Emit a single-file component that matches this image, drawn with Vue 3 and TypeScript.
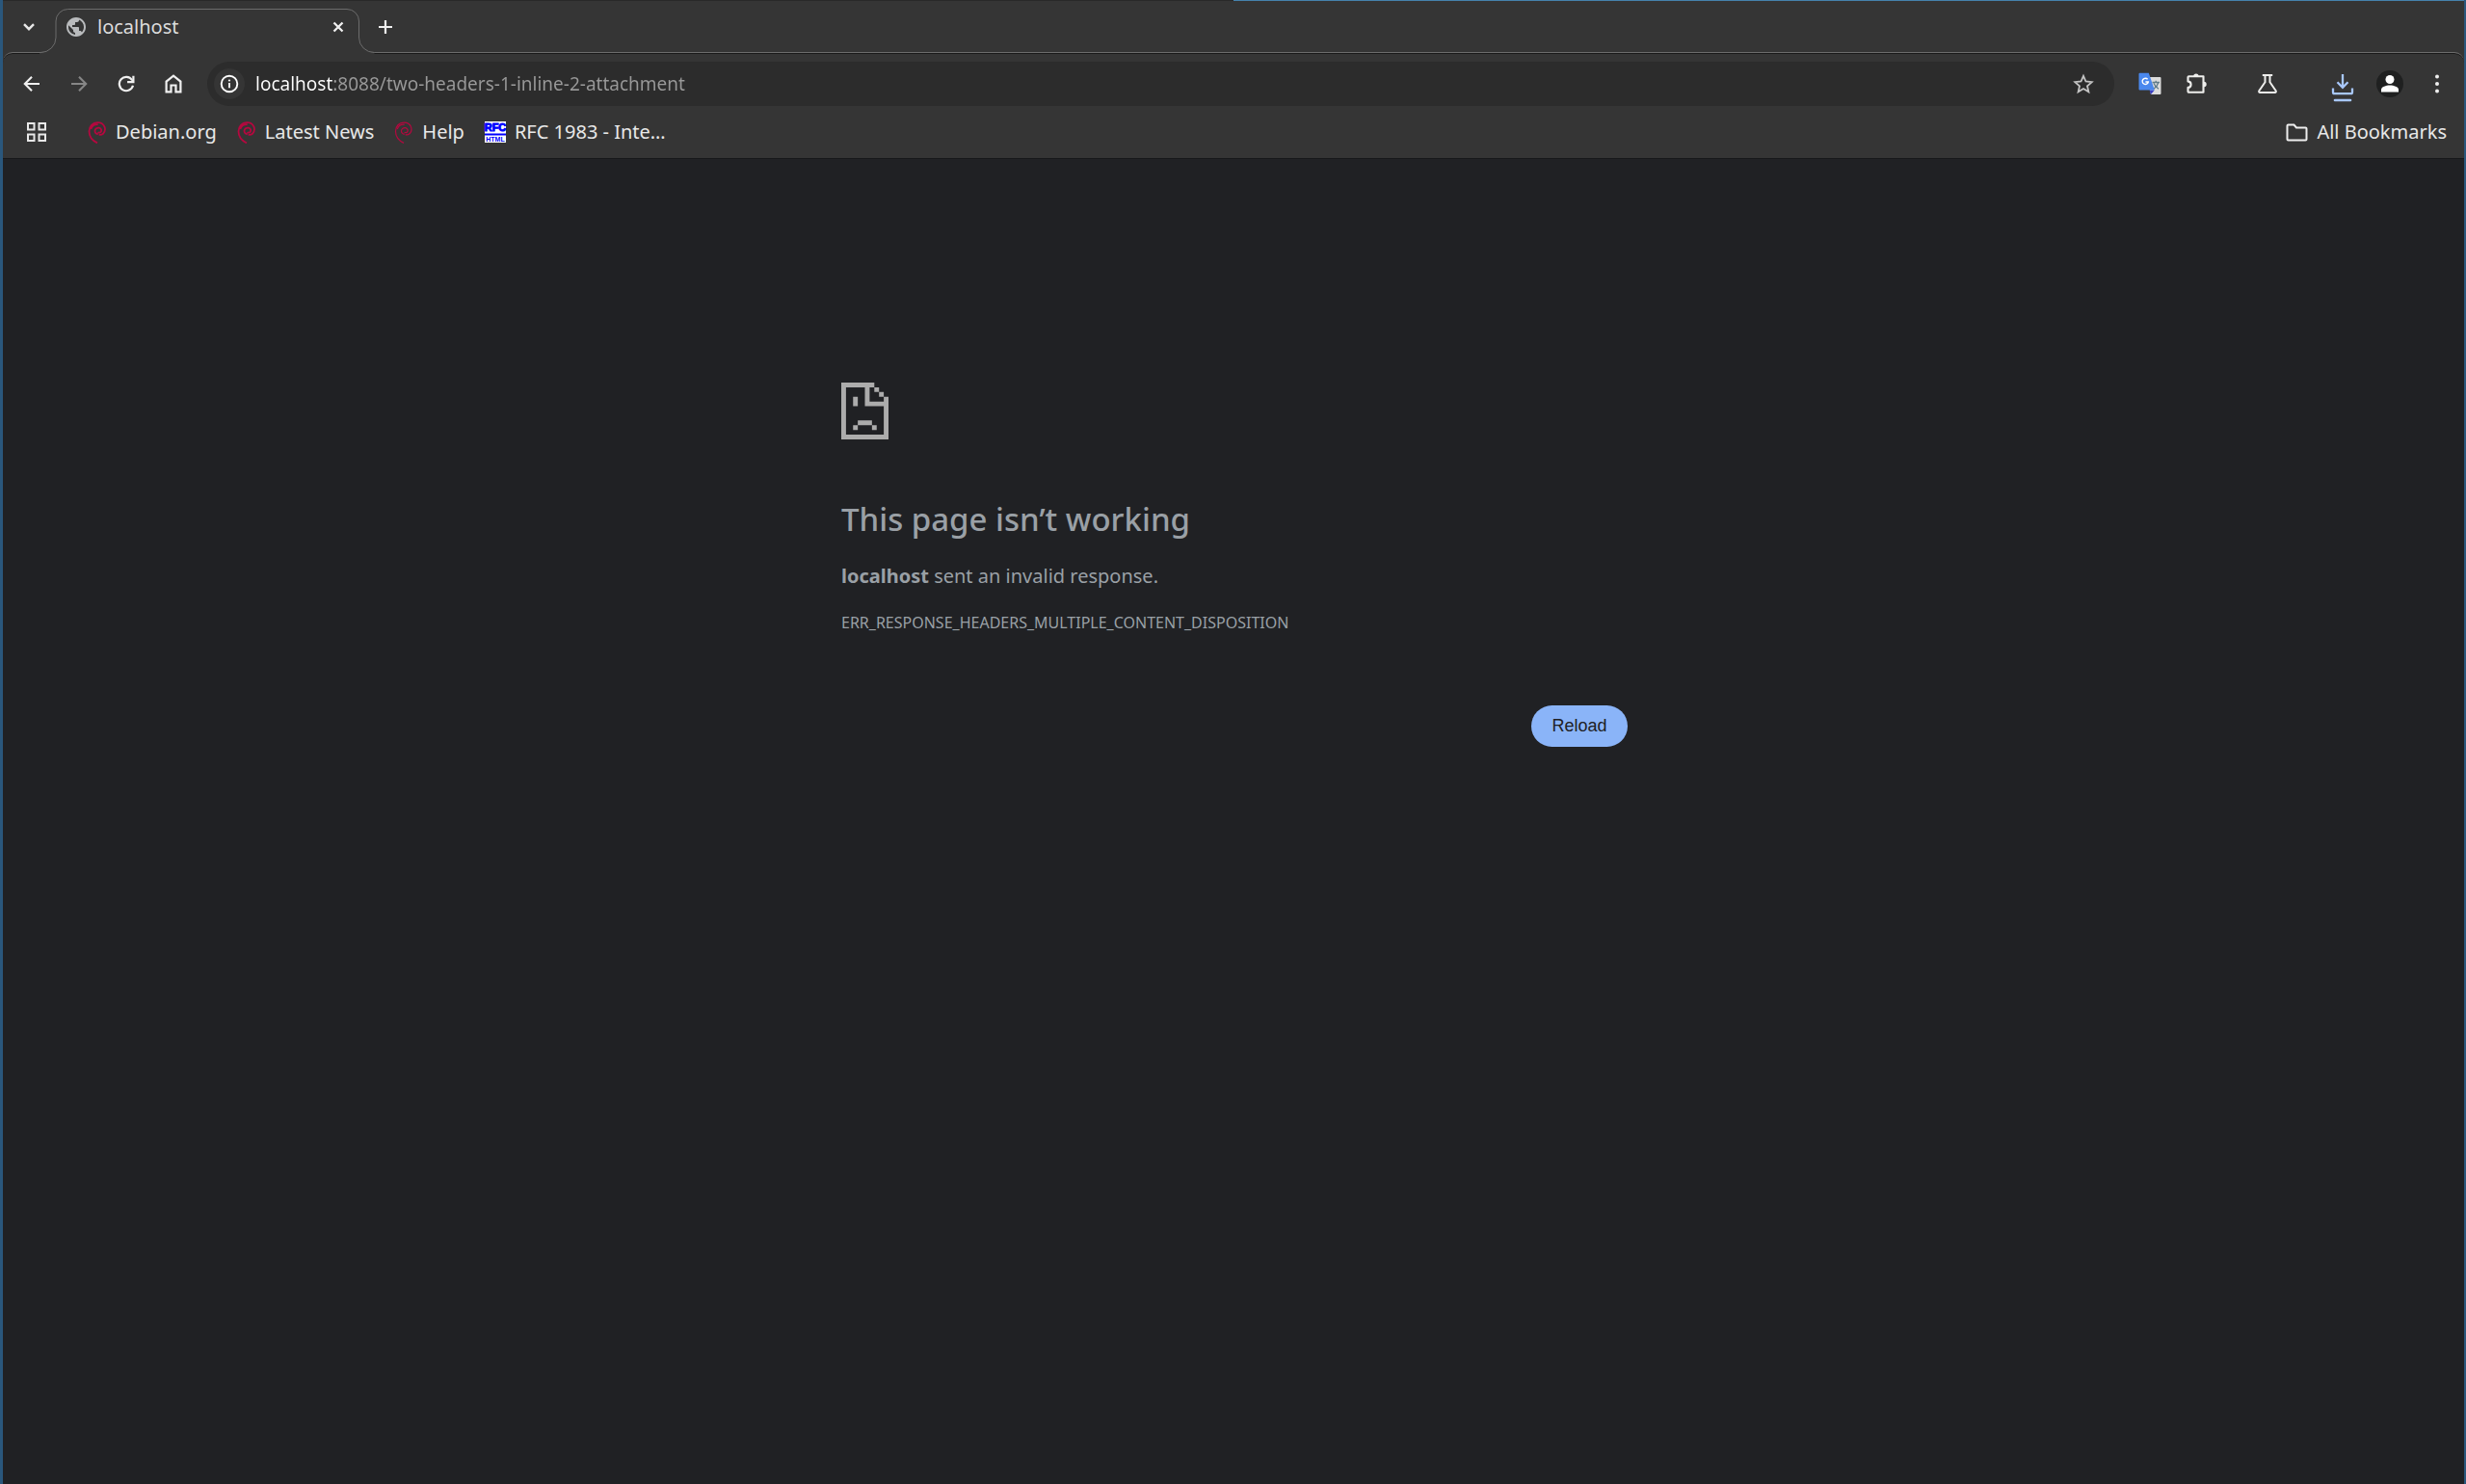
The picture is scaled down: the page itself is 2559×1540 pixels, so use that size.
<script setup lang="ts">
import { ref } from 'vue'

interface Bookmark {
  label: string
  icon: 'swirl' | 'swirl-thin' | 'rfc'
}

const address = ref('localhost:8088/two-headers-1-inline-2-attachment')

const bookmarks: Bookmark[] = [
  { label: 'Debian.org', icon: 'swirl' },
  { label: 'Latest News', icon: 'swirl' },
  { label: 'Help', icon: 'swirl-thin' },
  { label: 'RFC 1983 - Inte…', icon: 'rfc' },
]
</script>

<template>
  <div class="window">
    <header class="tabstrip">
      <button class="tab-search" aria-label="Search tabs">
        <svg width="12" height="8" viewBox="0 0 12 8"><path d="M1 1.2l5 5 5-5" fill="none" stroke="#e8e8e8" stroke-width="2.4" /></svg>
      </button>
      <div class="tab">
        <svg class="tab-shape" width="348" height="47" viewBox="0 0 348 47">
          <path d="M0 47V45.500H1A16 15.500 0 0 0 17 30V13A12.500 12.500 0 0 1 29.500 .5H319A12.500 12.500 0 0 1 331.500 13V30A16 15.500 0 0 0 347.500 45.500V47z" fill="#353535" />
          <path d="M0 45.500H1A16 15.500 0 0 0 17 30V13A12.500 12.500 0 0 1 29.500 .5H319A12.500 12.500 0 0 1 331.500 13V30A16 15.500 0 0 0 347.500 45.500" fill="none" stroke="#6c6c6c" />
        </svg>
        <svg class="globe" width="20" height="20" viewBox="2 2 20 20">
          <path d="M12 2C6.480 2 2 6.480 2 12s4.480 10 10 10 10-4.480 10-10S17.520 2 12 2zm-1 17.930c-3.950-.490-7-3.850-7-7.930 0-.620.080-1.210.210-1.790L9 15v1c0 1.100.900 2 2 2v1.930zm6.900-2.540c-.260-.810-1-1.390-1.900-1.390h-1v-3c0-.550-.450-1-1-1H8v-2h2c.550 0 1-.450 1-1V7h2c1.100 0 2-.900 2-2v-.410c2.930 1.190 5 4.060 5 7.410 0 2.080-.800 3.970-2.100 5.390z" fill="#b9bbbd" />
        </svg>
        <span class="tab-title">localhost</span>
        <button class="tab-close" aria-label="Close tab">
          <svg width="12" height="12" viewBox="0 0 12 12"><path d="M1.500 1.500l9 9M10.500 1.500l-9 9" stroke="#f0f0f0" stroke-width="2.300" /></svg>
        </button>
      </div>
      <button class="new-tab" aria-label="New tab">
        <svg width="14" height="14" viewBox="0 0 14 14"><path d="M7 0v14M0 7h14" stroke="#f0f0f0" stroke-width="2.200" /></svg>
      </button>
    </header>

    <section class="chrome">
      <nav class="toolbar">
        <button class="tool" aria-label="Back">
          <svg width="18" height="18" viewBox="0 0 18 18"><path d="M17 9H2.500M9 1.800L1.800 9 9 16.200" fill="none" stroke="#f0f0f0" stroke-width="2.100" /></svg>
        </button>
        <button class="tool" aria-label="Forward">
          <svg width="18" height="18" viewBox="0 0 18 18"><path d="M1 9h14.500M9 1.800L16.200 9 9 16.200" fill="none" stroke="#868686" stroke-width="2.100" /></svg>
        </button>
        <button class="tool" aria-label="Reload page">
          <svg width="18" height="18" viewBox="0 0 18 18"><path d="M15 5A7.200 7.200 0 1 0 16 10.800" fill="none" stroke="#f0f0f0" stroke-width="2.200" /><path d="M17.500 .8v7.400h-7.400V6h3.700l1.500-1.500V.8z" fill="#f0f0f0" /></svg>
        </button>
        <button class="tool" aria-label="Home">
          <svg width="18" height="20" viewBox="0 0 18 20"><path d="M1.600 18.400V7.600L9 1.700l7.400 5.900v10.800h-4.900v-6.900h-5v6.900z" fill="none" stroke="#f0f0f0" stroke-width="2.200" /></svg>
        </button>
        <div class="omnibox">
          <button class="site-info" aria-label="View site information">
            <svg width="20" height="20" viewBox="0 0 20 20"><circle cx="10" cy="10" r="8.300" fill="none" stroke="#fff" stroke-width="1.900" /><path d="M10 9v5.200" stroke="#fff" stroke-width="1.800" /><circle cx="10" cy="6.500" r="1.100" fill="#fff" /></svg>
          </button>
          <input v-model="address" class="address" type="text" aria-label="Address" spellcheck="false" />
          <button class="star" aria-label="Bookmark this tab">
            <svg width="22" height="22" viewBox="0 0 22 22"><path d="M11 2.800l2.500 5.700 6.200.6-4.700 4.100 1.400 6.100L11 16.100l-5.400 3.200L7 13.200 2.300 9.100l6.200-.6z" fill="none" stroke="#c4c4c4" stroke-width="1.800" /></svg>
          </button>
        </div>
        <button class="tool" aria-label="Translate">
          <svg width="24" height="24" viewBox="0 0 24 24">
            <path d="M9 5h13.500a1 1 0 0 1 1 1v16a1 1 0 0 1-1 1H13z" fill="#dcdcdc" />
            <path d="M14.500 10.500h7.500M18.200 8.800v1.700M20.800 10.500c-.8 3-2.800 5.300-5 6.800M16 11.500c1 2.400 2.800 4.300 5 5.700" fill="none" stroke="#607d8b" stroke-width="1.300" />
            <path d="M11.500 18.500h5.300L13 23z" fill="#3b3fc4" />
            <path d="M1.500.8h9.300l6 17.700H1.500a1 1 0 0 1-1-1V1.800a1 1 0 0 1 1-1z" fill="#4a88ee" />
            <path d="M9.600 7.300A3.100 3.100 0 1 0 10.300 10H7.400" fill="none" stroke="#fff" stroke-width="1.400" />
          </svg>
        </button>
        <button class="tool" aria-label="Extensions">
          <svg width="24" height="24" viewBox="0 0 24 24"><path d="M3.500 4.200H18.500V20.800H3.500Q2.500 20.800 2.500 19.800V15.900C6.600 15.500 6.600 9.800 2.500 9.400V5.200Q2.500 4.200 3.500 4.200z" fill="none" stroke="#eeeeec" stroke-width="2.100" stroke-linejoin="round" /><path d="M8.200 4.200a2.700 2.700 0 0 1 5.400 0zM19 9.800a2.700 2.700 0 0 1 0 5.400z" fill="#eeeeec" /></svg>
        </button>
        <button class="tool labs" aria-label="Experiments">
          <svg width="22" height="22" viewBox="0 0 22 22"><path d="M5.800 2h10.400M8.500 2v7.300L2.300 18.200c-.5.900 0 1.800 1 1.800h15.400c1 0 1.500-.9 1-1.800L13.500 9.300V2" fill="none" stroke="#eeeeec" stroke-width="2" /></svg>
        </button>
        <button class="tool downloads" aria-label="Downloads">
          <svg width="24" height="30" viewBox="0 0 24 30"><path d="M12 1v13.500M6.500 9.300l5.500 5.500 5.500-5.500M2 15.500v4.300c0 .9.500 1.400 1.400 1.400h17.200c.9 0 1.400-.5 1.400-1.400v-4.300" fill="none" stroke="#a8c7fa" stroke-width="2.300" /><path d="M4 28h16" stroke="#a8c7fa" stroke-width="2.600" stroke-linecap="round" /></svg>
        </button>
        <button class="tool" aria-label="Profile">
          <svg width="28" height="28" viewBox="0 0 28 28"><circle cx="14" cy="14" r="14" fill="#1f2020" /><circle cx="14" cy="9.500" r="4.500" fill="#fff" /><path d="M5 22.500v-2.500c0-3 5-4.600 9-4.600s9 1.600 9 4.600v2.500z" fill="#fff" /></svg>
        </button>
        <button class="tool" aria-label="Menu">
          <svg width="6" height="20" viewBox="0 0 6 20"><g fill="#eee"><circle cx="3" cy="2.500" r="2" /><circle cx="3" cy="10" r="2" /><circle cx="3" cy="17.500" r="2" /></g></svg>
        </button>
      </nav>

      <nav class="bookmarks">
        <button class="apps" aria-label="Apps">
          <svg width="20" height="20" viewBox="0 0 20 20"><path d="M1 1h6.500v6.500H1zM12.500 1H19v6.500h-6.500zM1 12.500h6.500V19H1zM12.500 12.500H19V19h-6.500z" fill="none" stroke="#e8e8e8" stroke-width="2" /></svg>
        </button>
        <a v-for="item in bookmarks" :key="item.label" class="bookmark" href="#">
          <svg v-if="item.icon === 'rfc'" class="rfc" width="22" height="22" viewBox="0 0 22 22">
            <path d="M0 0h22v22H0z" fill="#fff" />
            <path d="M0 12.500h22v2H0z" fill="#00f" />
            <text x="11" y="10" class="rfc-text" font-size="11" stroke-width="1" text-anchor="middle">RFC</text>
            <text x="11" y="21" class="rfc-text" font-size="7" stroke-width="0" text-anchor="middle">HTML</text>
          </svg>
          <svg v-else width="20" height="23" viewBox="0 0 20 23">
            <path d="M10.800 13.200C8.800 13 7.300 11.600 7.500 9.700 7.700 7.500 9.800 6.300 11.800 6.700 13.800 7.100 14.600 9 13.900 10.500 13.300 11.800 11.500 12 10.700 11M17.600 5.800C18.400 8.500 17.800 11 16 12.800 14.700 13.900 13 14.200 11.700 13.600M17.600 5.800C16.300 2.800 13.600 1.200 10.300 1.200 5 1.200 1.500 5 1.500 10.300 1.500 16 5.600 20.300 10 22.400M3.300 8C4.300 4.700 7.400 2.900 10.700 3.100" fill="none" stroke="#b5083f" :stroke-width="item.icon === 'swirl' ? 1.800 : 1.200" />
          </svg>
          <span>{{ item.label }}</span>
        </a>
        <a class="bookmark all" href="#">
          <svg width="23" height="19" viewBox="0 0 23 19"><path d="M2.500 1.500h6l2.500 3h9.500c.6 0 1 .4 1 1v11c0 .6-.4 1-1 1h-18c-.6 0-1-.4-1-1v-14c0-.6.4-1 1-1z" fill="none" stroke="#eee" stroke-width="2" /></svg>
          <span>All Bookmarks</span>
        </a>
      </nav>
    </section>

    <main class="page">
      <div class="error">
        <svg class="sad" width="49" height="59" viewBox="0 0 20 24" preserveAspectRatio="none">
          <path d="M0 0h14v2H2v20h16V6h2v18H0zM10 2h2v6h8v2H10zM14 2h2v2h-2zM16 4h2v2h-2zM5 6h2v4H5zM7 16h6v2H7zM5 18h2v2H5zM13 18h2v2h-2z" fill="#acacac" />
        </svg>
        <h1>This page isn’t working</h1>
        <p><strong>localhost</strong> sent an invalid response.</p>
        <div class="code">ERR_RESPONSE_HEADERS_MULTIPLE_CONTENT_DISPOSITION</div>
        <div class="actions">
          <button class="reload">Reload</button>
        </div>
      </div>
    </main>
  </div>
</template>

<style>
body {
  margin: 0;
  background: #202124;
}
</style>

<style scoped>
.window {
  box-sizing: border-box;
  min-height: 100vh;
  display: flex;
  flex-direction: column;
  border-left: 3px solid #2a577c;
  border-right: 2px solid #2a577c;
  background: #202124;
  font-family: "Noto Sans", "Open Sans", sans-serif;
  font-size: 20px;
}

button {
  display: flex;
  align-items: center;
  justify-content: center;
  padding: 0;
  border: 0;
  background: none;
  flex: none;
}

svg {
  display: block;
  flex: none;
}

.tabstrip {
  position: relative;
  z-index: 1;
  box-sizing: border-box;
  height: 54px;
  display: flex;
  align-items: flex-start;
  padding-top: 9px;
  background:
    linear-gradient(90deg, #292929 50%, #4582ac 50%) top / 100% 1px no-repeat,
    #353535;
}

.tab-search {
  width: 54px;
  height: 38px;
}

.tab {
  position: relative;
  box-sizing: border-box;
  width: 316px;
  height: 47px;
  display: flex;
  align-items: flex-start;
  padding: 9px 16px 0 12px;
}

.tab-shape {
  position: absolute;
  top: 0;
  left: -16px;
}

.globe,
.tab-title,
.tab-close {
  position: relative;
}

.tab-title {
  flex: 1;
  margin-left: 12px;
  line-height: 20px;
  color: #dcdcdc;
}

.tab-close {
  width: 12px;
  height: 20px;
}

.new-tab {
  width: 54px;
  height: 38px;
}

.chrome {
  border-top: 1px solid #6c6c6c;
  border-bottom: 1px solid #17181a;
  border-radius: 10px 10px 0 0;
  background: #353535;
  box-shadow: inset 0 1px 0 #1a1a1a, 0 -10px 0 #353535;
}

.toolbar {
  display: flex;
  align-items: center;
  padding: 9px 4px 0 5px;
}

.tool {
  width: 49px;
  height: 46px;
}

.omnibox {
  flex: 1;
  display: flex;
  align-items: center;
  height: 46px;
  margin: 0 12px 0 11px;
  border-radius: 23px;
  background: #2c2c2c;
}

.site-info {
  width: 32px;
  height: 32px;
  margin-left: 7px;
  border-radius: 50%;
  background: #353535;
}

.address {
  flex: 1;
  height: 46px;
  margin-left: 11px;
  padding: 0;
  border: 0;
  outline: 0;
  background: linear-gradient(90deg, #fff 80px, #999 80px);
  background-clip: text;
  color: transparent;
  font: inherit;
  font-size: 19px;
  line-height: 46px;
}

.star {
  width: 64px;
  height: 46px;
}

.labs {
  margin-left: 24px;
}

.downloads {
  margin-left: 29px;
  padding-top: 7px;
}

.bookmarks {
  display: flex;
  align-items: center;
  height: 54px;
  padding: 0 18px 0 25px;
}

.apps {
  width: 20px;
  height: 32px;
  margin-right: 22px;
}

.bookmark {
  display: flex;
  align-items: center;
  gap: 9px;
  margin-left: 21px;
  color: #e8e8e8;
  text-decoration: none;
  font-size: 20px;
  line-height: 28px;
}

.all {
  margin-left: auto;
}

.rfc {
  overflow: visible;
}

.rfc-text {
  font-family: "Liberation Sans", sans-serif;
  font-weight: 700;
  fill: #00f;
  stroke: #00f;
}

.page {
  flex: 1;
  padding: 232px 0 0 2px;
  color: #9aa0a6;
}

.error {
  max-width: 816px;
  margin: 0 auto;
}

h1 {
  margin: 59px 0 0;
  font-size: 33px;
  font-weight: 500;
  line-height: 48px;
}

p {
  margin: 21px 0 0;
  font-size: 20px;
  line-height: 28px;
}

.code {
  margin-top: 24px;
  font-size: 16px;
  line-height: 20px;
}

.actions {
  display: flex;
  justify-content: flex-end;
  margin-top: 76px;
}

.reload {
  width: 100px;
  height: 43px;
  border-radius: 22px;
  background: #8ab4f8;
  color: #202124;
  font-family: "Liberation Sans", Arial, sans-serif;
  font-size: 18px;
}
</style>
